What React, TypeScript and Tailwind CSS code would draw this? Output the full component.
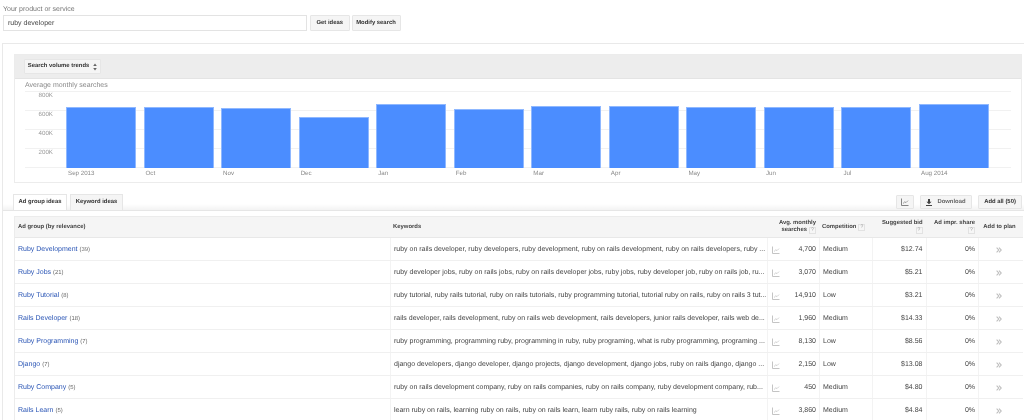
const font = { fontFamily: '"Liberation Sans", Arial, sans-serif' };

const bars = [
  { label: "Sep 2013", top: 107 },
  { label: "Oct", top: 106.5 },
  { label: "Nov", top: 108 },
  { label: "Dec", top: 116.5 },
  { label: "Jan", top: 104 },
  { label: "Feb", top: 108.5 },
  { label: "Mar", top: 105.5 },
  { label: "Apr", top: 106 },
  { label: "May", top: 106.5 },
  { label: "Jun", top: 106.5 },
  { label: "Jul", top: 106.5 },
  { label: "Aug 2014", top: 104 },
];

const rows = [
  { name: "Ruby Development", count: 39, kw: "ruby on rails developer, ruby developers, ruby development, ruby on rails development, ruby on rails developers, ruby ...", vol: "4,700", comp: "Medium", bid: "$12.74" },
  { name: "Ruby Jobs", count: 21, kw: "ruby developer jobs, ruby on rails jobs, ruby on rails developer jobs, ruby jobs, ruby developer job, ruby on rails job, ru...", vol: "3,070", comp: "Medium", bid: "$5.21" },
  { name: "Ruby Tutorial", count: 8, kw: "ruby tutorial, ruby rails tutorial, ruby on rails tutorials, ruby programming tutorial, tutorial ruby on rails, ruby on rails 3 tut...", vol: "14,910", comp: "Low", bid: "$3.21" },
  { name: "Rails Developer", count: 18, kw: "rails developer, rails development, ruby on rails web development, rails developers, junior rails developer, rails web de...", vol: "1,960", comp: "Medium", bid: "$14.33" },
  { name: "Ruby Programming", count: 7, kw: "ruby programming, programming ruby, programming in ruby, ruby programing, what is ruby programming, programing ...", vol: "8,130", comp: "Low", bid: "$8.56" },
  { name: "Django", count: 7, kw: "django developers, django developer, django projects, django development, django jobs, ruby on rails django, django ...", vol: "2,150", comp: "Low", bid: "$13.08" },
  { name: "Ruby Company", count: 5, kw: "ruby on rails development company, ruby on rails companies, ruby on rails company, ruby development company, rub...", vol: "450", comp: "Medium", bid: "$4.80" },
  { name: "Rails Learn", count: 5, kw: "learn ruby on rails, learning ruby on rails, ruby on rails learn, learn ruby rails, ruby on rails learning", vol: "3,860", comp: "Medium", bid: "$4.84" },
];

const gridCols = "grid grid-cols-[375px_376.5px_52.5px_53px_53.5px_52.5px_1fr]";

const MiniChart = ({ color = "#bdbdbd" }: { color?: string }) => (
  <svg width="8" height="8" viewBox="0 0 8 8" fill="none">
    <path d="M0.5 0.5V7.5H7.5" stroke={color} strokeWidth="0.9" />
    <path d="M2 5.5L3.8 3.8L5 4.6L7 2.6" stroke={color} strokeWidth="0.7" />
  </svg>
);

const Help = () => (
  <span className="inline-flex items-center justify-center w-[7px] h-[7px] border border-[#e2e2e2] bg-[#f6f6f6] text-[5px] leading-none font-normal text-[#999]">
    ?
  </span>
);

const Button = ({ children, className }: { children: React.ReactNode; className: string }) => (
  <div className={`flex items-center justify-center whitespace-nowrap border border-[#e6e6e6] bg-[#f5f5f5] rounded-[1px] text-[5.9px] font-bold text-[#333] ${className}`}>
    {children}
  </div>
);

const App = () => {
  return (
    <div style={font} className="w-[1024px] h-[420px] overflow-hidden bg-white blur-[0.4px] [text-rendering:geometricPrecision]">
      <div className="h-[43px] pl-[3px] pt-[5px]">
        <div className="h-[10px] text-[7px] leading-[9px] text-[#777]">Your product or service</div>
        <div className="flex gap-[2px]">
          <div className="w-[304px] h-[16px] mr-px border border-[#e3e3e3] pl-[4px] text-[7px] leading-[15px] text-[#444]">ruby developer</div>
          <Button className="w-[39.5px] h-[16px]">Get ideas</Button>
          <Button className="w-[49px] h-[16px]">Modify search</Button>
        </div>
      </div>

      <div className="ml-[2px] border-l border-t border-[#e9e9e9] pt-[10px]">
        {/* chart card */}
        <div className="ml-[11px] mr-[2px] h-[129px] border border-[#ececec]">
          <div className="h-[24px] bg-[#ededed] border-b border-[#e4e4e4] pl-[9px] pt-[4px]">
            <Button className="w-[77px] h-[15px] gap-[4px]">
              Search volume trends
              <svg width="4" height="8" viewBox="0 0 4 8" fill="#666">
                <path d="M2 0.5L3.8 3H0.2Z" />
                <path d="M2 7.5L3.8 5H0.2Z" />
              </svg>
            </Button>
          </div>
          <div className="pl-[10px] pt-px pr-[10px]">
            <div className="h-[11px] text-[7px] leading-[12px] text-[#888]">Average monthly searches</div>
            <div className="relative h-[77px]">
              {[0, 19, 38, 57, 76].map((y) => (
                <div key={y} style={{ top: y }} className="absolute left-0 right-0 h-px bg-[#f1f1f1]" />
              ))}
              {["800K", "600K", "400K", "200K"].map((t, i) => (
                <div key={t} style={{ top: i * 19 + 1 }} className="absolute w-[28px] text-right text-[6.2px] leading-[8px] text-[#999]">
                  {t}
                </div>
              ))}
              <div className="absolute inset-0 flex items-end gap-[7.55px] pl-[41px]">
                {bars.map((b) => (
                  <div key={b.label} style={{ height: 168 - b.top }} className="w-[70px] bg-[#4b8dff] border border-[#8fb8ff] border-b-0" />
                ))}
              </div>
            </div>
            <div className="flex gap-[7.55px] pl-[41px] pt-px">
              {bars.map((b) => (
                <div key={b.label} className="w-[70px] pl-[2px] text-[6.2px] leading-[9px] text-[#888]">
                  {b.label}
                </div>
              ))}
            </div>
          </div>
        </div>

        {/* tabs and actions */}
        <div className="mt-[12px] h-[16px] flex items-end justify-between bg-gradient-to-b from-white from-[60%] to-[#f3f3f3] border-b border-[#e6e6e6] pl-[10px] pr-[2px]">
          <div className="flex gap-[3px] h-[16px]">
            <div className="w-[54px] flex items-center justify-center border border-b-0 border-[#e6e6e6] bg-white text-[5.9px] font-bold text-[#333]">Ad group ideas</div>
            <div className="w-[53px] flex items-center justify-center border border-b-0 border-[#e6e6e6] bg-[#f5f5f5] text-[5.9px] font-bold text-[#333]">Keyword ideas</div>
          </div>
          <div className="flex gap-[6px] pb-px self-start">
            <Button className="w-[18px] h-[14px]"><MiniChart color="#777" /></Button>
            <Button className="w-[52px] h-[14px] gap-[5px] text-[#666]">
              <svg width="6" height="7" viewBox="0 0 6 7" fill="#444">
                <path d="M2 0H4V2.8H5.6L3 5.2L0.4 2.8H2ZM0 6H6V7H0Z" />
              </svg>
              Download
            </Button>
            <Button className="w-[44px] h-[14px]">Add all (50)</Button>
          </div>
        </div>

        {/* ideas table */}
        <div className="ml-[11px] mr-px mt-[5px] border-l border-t border-[#ececec]">
          <div className={`${gridCols} h-[21px] bg-[#f5f5f5] border-b border-[#e8e8e8] text-[5.9px] leading-[7px] font-bold text-[#444]`}>
            <div className="flex items-center pl-[3px]">Ad group (by relevance)</div>
            <div className="flex items-center pl-[3px]">Keywords</div>
            <div className="flex flex-col items-end justify-center pr-[3px] text-right whitespace-nowrap">
              <span>Avg. monthly</span>
              <span className="flex items-center gap-[2px]">searches <Help /></span>
            </div>
            <div className="flex items-center gap-[2px] pl-[3px]">Competition <Help /></div>
            <div className="flex flex-col items-end justify-center pr-[3px] whitespace-nowrap">
              <span>Suggested bid</span>
              <Help />
            </div>
            <div className="flex flex-col items-end justify-center pr-[3px] whitespace-nowrap">
              <span>Ad impr. share</span>
              <Help />
            </div>
            <div className="flex items-center justify-center pr-[2px] whitespace-nowrap">Add to plan</div>
          </div>
          {rows.map((r) => (
            <div key={r.name} className={`${gridCols} h-[23px] border-b border-[#f0f0f0] text-[7px] text-[#444]`}>
              <div className="flex items-center pl-[3px] pt-[2px] gap-[2px]">
                <span className="text-[#2a55b5]">{r.name}</span>
                <span className="text-[5.9px] text-[#666]">({r.count})</span>
              </div>
              <div className="flex items-center pl-[3px] pt-[2px] border-l border-[#f3f3f3] whitespace-nowrap">{r.kw}</div>
              <div className="flex items-center justify-between pl-[4px] pr-[3px] pt-[2px] border-l border-[#f3f3f3]">
                <MiniChart />
                <span>{r.vol}</span>
              </div>
              <div className="flex items-center pl-[3px] pt-[2px] border-l border-[#f3f3f3]">{r.comp}</div>
              <div className="flex items-center justify-end pr-[3px] pt-[2px] border-l border-[#f3f3f3]">{r.bid}</div>
              <div className="flex items-center justify-end pr-[3px] pt-[2px] border-l border-[#f3f3f3]">0%</div>
              <div className="flex items-center justify-center pr-[4px] pt-[2px] border-l border-[#f3f3f3]">
                <svg width="6" height="6" viewBox="0 0 6 6" fill="none" stroke="#bdbdbd" strokeWidth="1.1">
                  <path d="M0.6 0.6L2.8 3L0.6 5.4" />
                  <path d="M3 0.6L5.2 3L3 5.4" />
                </svg>
              </div>
            </div>
          ))}
        </div>
      </div>
    </div>
  );
};

export default App;
